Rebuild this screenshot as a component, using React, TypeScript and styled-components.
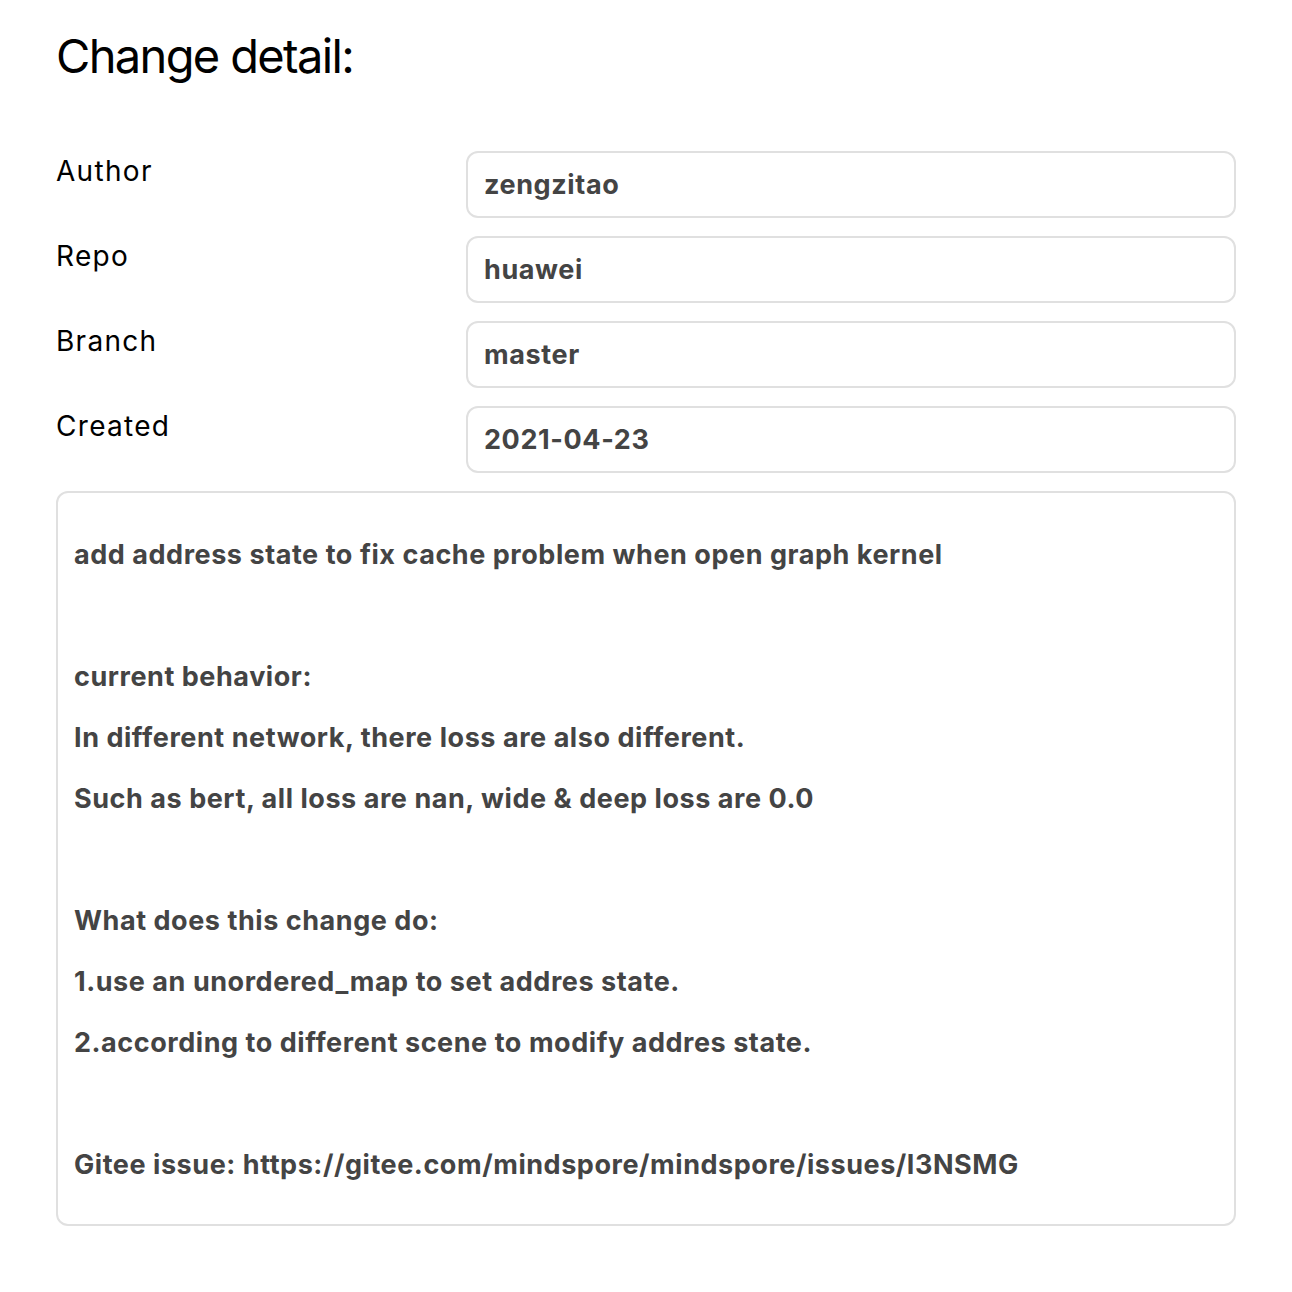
import React from "react";
import styled, { createGlobalStyle } from "styled-components";

const GlobalStyle = createGlobalStyle`
  html, body { margin: 0; padding: 0; background: #fff; }
  body { font-family: Inter, "Noto Sans", "Liberation Sans", sans-serif; }
`;

const Page = styled.div`
  padding: 24px 56px 40px 56px;
  width: 1180px;
`;

const Title = styled.h1`
  margin: 0 0 63px 0;
  font-size: 47px;
  font-weight: 400;
  letter-spacing: -1.65px;
  line-height: 64px;
  color: #000;
`;

const Grid = styled.div`
  display: grid;
  grid-template-columns: 410px 1fr;
  row-gap: 18px;
`;

const Label = styled.div`
  font-size: 28px;
  letter-spacing: 1.3px;
  line-height: 40px;
  color: #000;
`;

const Field = styled.div`
  height: 63px;
  border: 2px solid #e0e0e0;
  border-radius: 12px;
  display: flex;
  align-items: center;
  padding: 0 16px;
  font-size: 27px;
  font-weight: 700;
  letter-spacing: 0.6px;
  color: #444;
`;

const Description = styled.div`
  margin-top: 18px;
  border: 2px solid #e0e0e0;
  border-radius: 12px;
  padding: 31px 16px 29px 16px;
  font-size: 27px;
  font-weight: 700;
  letter-spacing: 0.55px;
  color: #444;
`;

const Line = styled.div`
  height: 61px;
  line-height: 61px;
  white-space: pre;
`;

const rows: [string, string][] = [
  ["Author", "zengzitao"],
  ["Repo", "huawei"],
  ["Branch", "master"],
  ["Created", "2021-04-23"],
];

const lines = [
  "add address state to fix cache problem when open graph kernel",
  "",
  "current behavior:",
  "In different network, there loss are also different.",
  "Such as bert, all loss are nan, wide & deep loss are 0.0",
  "",
  "What does this change do:",
  "1.use an unordered_map to set addres state.",
  "2.according to different scene to modify addres state.",
  "",
  "Gitee issue: https://gitee.com/mindspore/mindspore/issues/I3NSMG",
];

export default function App() {
  return (
    <Page>
      <GlobalStyle />
      <Title>Change detail:</Title>
      <Grid>
        {rows.map(([k, v]) => (
          <React.Fragment key={k}>
            <Label>{k}</Label>
            <Field>{v}</Field>
          </React.Fragment>
        ))}
      </Grid>
      <Description>
        {lines.map((l, i) => (
          <Line key={i}>{l}</Line>
        ))}
      </Description>
    </Page>
  );
}
